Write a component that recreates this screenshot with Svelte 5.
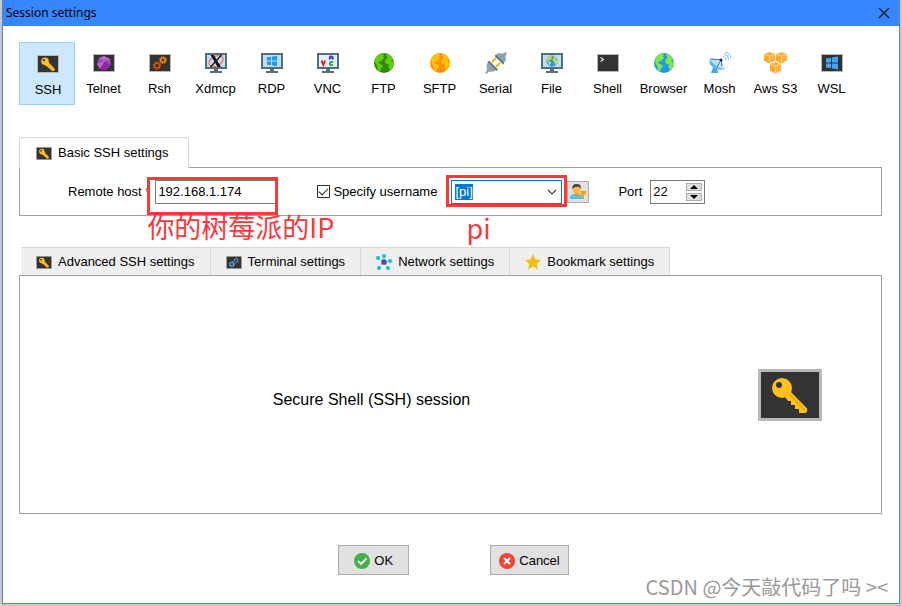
<script>
	import { onMount } from 'svelte';

	const sessions = ['SSH', 'Telnet', 'Rsh', 'Xdmcp', 'RDP', 'VNC', 'FTP', 'SFTP', 'Serial', 'File', 'Shell', 'Browser', 'Mosh', 'Aws S3', 'WSL'];

	const tabs = [
		{ icon: 'key', label: 'Advanced SSH settings' },
		{ icon: 'terminal', label: 'Terminal settings' },
		{ icon: 'network', label: 'Network settings' },
		{ icon: 'star', label: 'Bookmark settings' }
	];

	let current = $state('SSH');
	let host = $state('192.168.1.174');
	let specify = $state(true);
	let username = $state('[pi]');
	let port = $state(22);
	let userInput;

	onMount(() => {
		userInput.focus();
		userInput.select();
	});
</script>

{#snippet frame()}
	<rect x="1" y="3" width="22" height="18" fill="#b8b8b8" />
	<rect x="2" y="4" width="20" height="16" fill="#333" />
{/snippet}

{#snippet monitor()}
	<path d="M1 2h22v16H1z" fill="#546e7a" />
	<path d="M3 4h18v12H3z" fill="#bbdefb" />
	<path d="M10 18h4v2h4v2H6v-2h4z" fill="#546e7a" />
{/snippet}

{#snippet key()}
	<path d="M11 8.500 18.500 16.500q.8 1.500-.5 2.500h-2.500l-.3-1.600h-1.500l-.3-1.500h-1.500l-.3-1.500h-1.300L8 12z" fill="#ffc020" />
	<path d="m11.500 11.500 6 6" stroke="#e5a50a" stroke-width=".7" />
	<circle cx="9" cy="9.200" r="3.800" fill="#ffc020" />
	<circle cx="7.900" cy="8.100" r="1.200" fill="#333" />
{/snippet}

{#snippet gears(a, b)}
	<circle cx="9" cy="14.500" r="2.600" fill="none" stroke={a} stroke-width="1.500" />
	<circle cx="9" cy="14.500" r="3.700" fill="none" stroke={a} stroke-width="1.200" stroke-dasharray="1.400 1.500" />
	<circle cx="15" cy="9" r="2.300" fill="none" stroke={b} stroke-width="1.500" />
	<circle cx="15" cy="9" r="3.300" fill="none" stroke={b} stroke-width="1.200" stroke-dasharray="1.300 1.300" />
{/snippet}

{#snippet globe(sea, land)}
	<circle cx="12" cy="12" r="10" fill={sea} />
	<path d="M3 8Q5 3.500 10 2.300l2 1.200-1 2.300 1.500 1.400-2 1-1.200 2.200-2-.2-1.300 1.200 1.500 1.500 2.800.8.2 2-1.800 2.300-.5 2.800-2.400-2-.4-3.800L3.500 12.500zM14 4l2-1.200q4 2 5.500 6.200L20 8.500l-1 1.200 2.800 1.500v2.500l-1.600 3-1.200 1.800-1.500.5-1-3.500.2-2.300-2.900-.8-1-2.200 1.300-2.200 1.600-1-.9-1.200z" fill={land} />
{/snippet}

{#snippet cube(x, y)}
	<g transform="translate({x} {y})">
		<path d="M5.500 0 11 2v6.500l-5.500 3-5.500-3V2z" fill="#ffb13b" />
		<path d="m0 2 5.500 2v7.500L0 8.500z" fill="#ffa726" />
		<path d="m0 2.200 5.500 2 5.500-2M5.500 4.200v7" fill="none" stroke="#ffe0a8" stroke-width=".8" />
	</g>
{/snippet}

{#snippet sessionIcon(name)}
	<svg viewBox="0 0 24 24" width="24" height="24" aria-hidden="true">
		{#if name === 'SSH'}
			{@render frame()}
			{@render key()}
		{:else if name === 'Telnet'}
			{@render frame()}
			<path d="m12 5 6 3 1 6-5 5-6-1-3-5 2-6z" fill="#ab47bc" />
			<path d="m7 7 5-2 6 3-5 2zM5 13l8-3-5 8z" fill="#ba68c8" />
			<path d="m13 10 6 4-5 5-6-1z" fill="#8e24aa" />
		{:else if name === 'Rsh'}
			{@render frame()}
			{@render gears('#e65100', '#fb8c00')}
		{:else if name === 'Xdmcp'}
			{@render monitor()}
			<ellipse cx="12" cy="10" rx="7.500" ry="4.800" transform="rotate(-25 12 10)" fill="none" stroke="#ff7043" stroke-width="1.200" />
			<path d="M6.500 4h3.300l7.200 12h-3.300z" fill="#111" />
			<path d="m17.500 4-11 12" stroke="#111" stroke-width="1.200" />
		{:else if name === 'RDP'}
			{@render monitor()}
			<path d="m7 6.500 4-.7v3.700H7zm5-.8 5-.9v4.700h-5zM7 10.500h4v3.700l-4-.7zm5 0h5v4.700l-5-.9z" fill="#2196f3" />
		{:else if name === 'VNC'}
			{@render monitor()}
			<path d="M3 4h18v12H3z" fill="#e3effa" />
			<path d="m5.500 9.500 1.800 4.500L9 9.500" fill="none" stroke="#e01818" stroke-width="1.800" />
			<path d="M13.500 8.500V6.200q1.700-2 3.400 0v2.300m-3.400-1.300h3.400" fill="none" stroke="#2722d8" stroke-width="1.300" />
			<path d="M17.200 11.300q-3.500-1.200-3.500 1.200t3.500 1.200" fill="none" stroke="#16a034" stroke-width="1.600" />
		{:else if name === 'FTP'}
			{@render globe('#338a00', '#5fd00a')}
		{:else if name === 'SFTP'}
			{@render globe('#ff8f0a', '#ffc107')}
		{:else if name === 'Serial'}
			<path d="m8 11 4-4m0 9 4-4" stroke="#ffb300" stroke-width="2" />
			<path d="m4 11 8 8-2 1.500-5.200.3L2.500 23 1 21.500l2-2.300L2.500 14z" fill="#90a4ae" />
			<path d="m5 9.500 9 9-1.500 1.500-9-9z" fill="#607d8b" />
			<path d="m11.500 4 2.500-1.800 5.200.2L21.500 1 23 2.500 21.600 5l.2 4.500L19.500 12z" fill="#90a4ae" />
			<path d="m12 3.500 8.500 8.500L19 13.500 10.500 5z" fill="#607d8b" />
		{:else if name === 'File'}
			{@render monitor()}
			<g transform="translate(5.400 3.400) scale(.55)">{@render globe('#2196f3', '#cddc39')}</g>
		{:else if name === 'Shell'}
			{@render frame()}
			<path d="m4.500 6.500 3 2-3 2" fill="none" stroke="#eee" stroke-width="1.100" />
		{:else if name === 'Browser'}
			{@render globe('#2196f3', '#7ee84a')}
		{:else if name === 'Mosh'}
			<path d="m5 16-2 6h7l-1-5z" fill="#42a5f5" />
			<path d="M2 7q-2 7 4 10t11 1z" fill="#64b5f6" />
			<path d="M2 7Q9 7 17 18q-5 0-10-4T2 7z" fill="#bbdefb" />
			<path d="m3 8 10 1-4 7m4-7 1 6" fill="none" stroke="#1976d2" stroke-width="1" />
			<circle cx="13" cy="9" r="1.600" fill="#0d2b6b" />
			<path d="M15 5.500q3 0 3.500 4M16 3q4.500 1 5 6M17 1q5 1 6 6.500" fill="none" stroke="#7fbcf0" stroke-width="1" />
		{:else if name === 'Aws S3'}
			{@render cube(0, 1)}
			{@render cube(12, 1)}
			{@render cube(6, 11)}
		{:else}
			{@render frame()}
			<path d="m6 7.500 5-.8v4.800H6zm6-1 6-1v6h-6zM6 12.500h5v4.800l-5-.8zm6 0h6v6l-6-1z" fill="#42a5f5" />
		{/if}
	</svg>
{/snippet}

{#snippet tabIcon(name)}
	{#if name === 'key'}
		<svg viewBox="1 3 22 18" width="16" height="13" aria-hidden="true">{@render frame()}{@render key()}</svg>
	{:else if name === 'terminal'}
		<svg viewBox="1 3 22 18" width="16" height="13" aria-hidden="true">{@render frame()}{@render gears('#64b5f6', '#5c7bd0')}</svg>
	{:else if name === 'network'}
		<svg viewBox="0 0 16 16" width="16" height="16" aria-hidden="true">
			<path d="M8 8V2M8 8l6-1M8 8l4 6M8 8l-5 6M8 8 2 4" stroke="#b8c4dc" stroke-width="1" />
			<circle cx="8" cy="8" r="2.800" fill="#3f51b5" />
			<g fill="#00bcd4">
				<circle cx="8" cy="2" r="1.900" /><circle cx="14" cy="7" r="1.900" /><circle cx="12" cy="14" r="1.900" />
				<circle cx="3" cy="14" r="1.900" /><circle cx="2" cy="4" r="1.900" />
			</g>
		</svg>
	{:else}
		<svg viewBox="0 0 16 16" width="16" height="16" aria-hidden="true">
			<path d="m8 0 2.400 5.500 5.600.5-4.300 3.900L13 15.500l-5-3-5 3 1.300-5.600L0 6l5.600-.5z" fill="#f2c00c" />
		</svg>
	{/if}
{/snippet}

<div class="dialog">
	<header>
		<h1>Session settings</h1>
		<button class="close" aria-label="Close">
			<svg viewBox="0 0 12 12" width="12" height="12"><path d="m1 1 10 10M11 1 1 11" stroke="#111" stroke-width="1.200" /></svg>
		</button>
	</header>

	<main>
		<nav>
			{#each sessions as name}
				<button class="session" class:active={current === name} onclick={() => current = name}>
					{@render sessionIcon(name)}
					<span>{name}</span>
				</button>
			{/each}
		</nav>

		<section class="basic">
			<h2>
				{@render tabIcon('key')}
				Basic SSH settings
			</h2>
			<div class="panel form">
				<label for="host">Remote host *</label>
				<div class="field host">
					<input id="host" type="text" bind:value={host} />
					<span class="mark"></span>
					<span class="note">你的树莓派的IP</span>
				</div>

				<label class="check">
					<input type="checkbox" bind:checked={specify} />
					Specify username
				</label>
				<div class="field user">
					<input type="text" aria-label="Username" bind:value={username} bind:this={userInput} />
					<button class="drop" aria-label="Show usernames">
						<svg viewBox="0 0 10 6" width="10" height="6"><path d="m1 1 4 4 4-4" fill="none" stroke="#444" stroke-width="1.200" /></svg>
					</button>
					<span class="mark"></span>
					<span class="note">pi</span>
				</div>
				<button class="users" aria-label="Manage users">
					<svg viewBox="0 0 18 18" width="18" height="18">
						<path d="M1 16q0-5 4-5h5q4 0 4 5z" fill="#4fc3f7" />
						<path d="M5.500 9h4v3l-2 2-2-2z" fill="#ff9800" />
						<circle cx="7.500" cy="6.500" r="3.800" fill="#ffb74d" />
						<path d="M3.500 6Q2.500 1 7.500 1q5.500 0 4 5L10 3.800H6z" fill="#424242" />
						<path d="M11.500 8h5.500v3.500h-2V16h-1.500v-4.500h-2z" fill="#ffa000" />
					</svg>
				</button>

				<label for="port">Port</label>
				<div class="spin">
					<input id="port" type="text" inputmode="numeric" bind:value={port} />
					<div class="arrows">
						<button aria-label="Increase port" onclick={() => port = +port + 1}>
							<svg viewBox="0 0 8 4" width="8" height="4"><path d="m0 4 4-4 4 4z" /></svg>
						</button>
						<button aria-label="Decrease port" onclick={() => port = +port - 1}>
							<svg viewBox="0 0 8 4" width="8" height="4"><path d="m0 0 4 4 4-4z" /></svg>
						</button>
					</div>
				</div>
			</div>
		</section>

		<section class="more">
			<div class="tabs">
				{#each tabs as tab}
					<button class="tab">
						{@render tabIcon(tab.icon)}
						{tab.label}
					</button>
				{/each}
			</div>
			<div class="panel info">
				<p>Secure Shell (SSH) session</p>
				<svg viewBox="0 0 64 52" width="64" height="52" aria-hidden="true">
					<path d="M0 0h64v52H0z" fill="#b8b8b8" />
					<path d="M3 3h58v46H3z" fill="#333" />
					<path d="m32 22 17 17.500q.8 3-1.500 4.500H41v-4h-4v-4h-4v-4h-3l-3-4z" fill="#ffc020" />
					<path d="m31 25 16 16.500" stroke="#e8ad10" stroke-width="2" />
					<circle cx="24" cy="19" r="10" fill="#ffc020" />
					<circle cx="21" cy="16" r="3" fill="#333" />
				</svg>
			</div>
		</section>

		<footer>
			<button class="action">
				<svg viewBox="0 0 16 16" width="16" height="16" aria-hidden="true">
					<circle cx="8" cy="8" r="8" fill="#43b04a" />
					<path d="m4 8 3 3 5.500-5.500" fill="none" stroke="#fff" stroke-width="1.800" />
				</svg>
				OK
			</button>
			<button class="action">
				<svg viewBox="0 0 16 16" width="16" height="16" aria-hidden="true">
					<circle cx="8" cy="8" r="8" fill="#f44336" />
					<path d="m5 5 6 6m0-6-6 6" stroke="#fff" stroke-width="2" />
				</svg>
				Cancel
			</button>
		</footer>
	</main>

	<div class="watermark">CSDN @今天敲代码了吗 &gt;&lt;</div>
</div>

<style>
	:global(body) {
		background: #c9c9cb;
	}

	:global(#app) {
		display: flex;
		flex-direction: column;
		min-height: 100vh;
	}

	* {
		box-sizing: border-box;
	}

	.dialog {
		position: relative;
		display: flex;
		flex-direction: column;
		flex: 1;
		margin: 0 2px 2px;
		border: 1px solid #4a88e0;
		border-top: 0;
		background: #fff;
		color: #000;
		font: 13px/16px "Liberation Sans", Arial, sans-serif;
	}

	button, input {
		margin: 0;
		padding: 0;
		border: 0;
		border-radius: 0;
		background: none;
		color: inherit;
		font: inherit;
		outline: none;
	}

	svg {
		flex: none;
		display: block;
	}

	header {
		display: flex;
		align-items: center;
		justify-content: space-between;
		height: 26px;
		padding: 0 9px 0 3px;
		background: #3686ff;
	}

	h1 {
		margin: 0;
		font: 12px/16px "Noto Sans", "Open Sans", sans-serif;
	}

	main {
		display: flex;
		flex-direction: column;
		flex: 1;
		padding: 16px 17px 28px 16px;
	}

	nav {
		display: flex;
	}

	.session {
		display: flex;
		flex-direction: column;
		align-items: center;
		gap: 6px;
		width: 56px;
		height: 63px;
		padding: 9px 0 0 1px;
		white-space: nowrap;
	}

	.session.active {
		padding-left: 2px;
		border: 1px solid #99d1ff;
		background: #cce8ff;
	}

	.basic {
		margin-top: 32px;
	}

	h2 {
		position: relative;
		display: flex;
		align-items: center;
		gap: 6px;
		width: fit-content;
		height: 31px;
		margin: 0 0 -1px;
		padding: 0 19px 0 16px;
		border: 1px solid #d9d9d9;
		border-bottom: 0;
		background: #fff;
		font: inherit;
	}

	.panel {
		border: 1px solid #a0a0a0;
	}

	.form {
		display: flex;
		align-items: center;
		height: 49px;
		padding-left: 48px;
	}

	.field {
		position: relative;
		display: flex;
		height: 24px;
	}

	.host {
		width: 123px;
		margin: 0 39px 0 5px;
	}

	.host input {
		width: 100%;
		padding: 0 2px;
		border: 1px solid #7a7a7a;
	}

	.mark {
		position: absolute;
		border: 3px solid #fb3737;
		pointer-events: none;
	}

	.host .mark {
		inset: -3px 0 -11px -8px;
	}

	.user .mark {
		inset: -6px -6px -4px -6px;
	}

	.note {
		position: absolute;
		top: 29px;
		left: -8px;
		color: #fb3737;
		font: 27px/36px "Noto Sans CJK SC", sans-serif;
		white-space: nowrap;
		pointer-events: none;
	}

	.user .note {
		left: 14px;
	}

	.check {
		display: flex;
		align-items: center;
		gap: 3px;
	}

	.check input {
		appearance: none;
		width: 13px;
		height: 13px;
		border: 1px solid #333;
	}

	.check input:checked::before {
		content: "";
		display: block;
		width: 8px;
		height: 4px;
		margin: 2px 0 0 1px;
		border: solid #222;
		border-width: 0 0 1px 1px;
		transform: rotate(-45deg);
	}

	.user {
		width: 111px;
		margin: 0 5px 0 14px;
		border: 1px solid #0078d7;
	}

	.user input {
		flex: 1;
		min-width: 0;
		padding-left: 3px;
	}

	.user input::selection {
		background: #0078d7;
		color: #fff;
	}

	.drop {
		display: flex;
		align-items: center;
		justify-content: center;
		width: 18px;
	}

	.users {
		display: flex;
		align-items: center;
		justify-content: center;
		width: 22px;
		height: 22px;
		margin-right: 29px;
		border: 1px solid #adadad;
		background: #e1e1e1;
	}

	.spin {
		display: flex;
		align-items: center;
		width: 55px;
		height: 24px;
		margin-left: 8px;
		padding: 0 2px;
		border: 1px solid #7a7a7a;
	}

	.spin input {
		flex: 1;
		min-width: 0;
	}

	.arrows {
		display: flex;
		flex-direction: column;
		gap: 2px;
	}

	.arrows button {
		display: flex;
		align-items: center;
		justify-content: center;
		width: 16px;
		height: 8px;
		border: 1px solid #adadad;
		background: #e1e1e1;
	}

	.more {
		display: flex;
		flex-direction: column;
		flex: 1;
		margin-top: 31px;
	}

	.tabs {
		display: flex;
		padding-left: 2px;
	}

	.tab {
		display: flex;
		align-items: center;
		gap: 6px;
		height: 28px;
		padding: 1px 15px 0;
		border: solid #d9d9d9;
		border-width: 1px 1px 0 0;
		background: #efefef;
		white-space: nowrap;
	}

	.info {
		display: flex;
		align-items: center;
		flex: 1;
		padding-right: 59px;
	}

	.info p {
		flex: 1;
		margin: 0 35px 0 0;
		padding-top: 10px;
		font-size: 16px;
		line-height: 20px;
		text-align: center;
	}

	footer {
		display: flex;
		justify-content: center;
		gap: 81px;
		margin-top: 31px;
		padding-left: 6px;
	}

	.action {
		display: flex;
		align-items: center;
		justify-content: center;
		gap: 4px;
		min-width: 71px;
		height: 30px;
		padding: 1px 8px 0;
		border: 1px solid #adadad;
		background: #e1e1e1;
	}

	.watermark {
		position: absolute;
		right: 11px;
		bottom: 0;
		color: #999;
		font: 20px/32px "Noto Sans CJK SC", sans-serif;
	}
</style>
